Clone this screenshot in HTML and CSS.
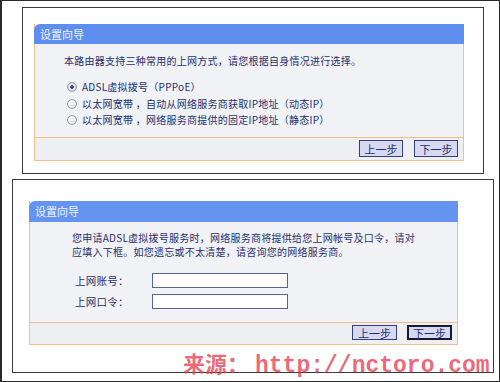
FILE: index.html
```html
<!DOCTYPE html>
<html>
<head>
    <title>设置向导</title>
    <link rel="stylesheet" href="styles.css">
</head>
<body>
    <div class="frame">
        <div class="panel panel-top">
            <div class="card card-wide">
                <div class="card-head">设置向导</div>
                <div class="card-body">
                    <p class="intro">本路由器支持三种常用的上网方式，请您根据自身情况进行选择。</p>
                    <ul class="choices">
                        <li><span class="radio checked"></span>ADSL虚拟拨号（PPPoE）</li>
                        <li><span class="radio"></span>以太网宽带 ，自动从网络服务商获取IP地址（动态IP）</li>
                        <li><span class="radio"></span>以太网宽带 ，网络服务商提供的固定IP地址（静态IP）</li>
                    </ul>
                </div>
                <div class="card-foot">
                    <button class="btn">上一步</button>
                    <button class="btn">下一步</button>
                </div>
            </div>
        </div>

        <div class="panel panel-bottom">
            <div class="card card-form">
                <div class="card-head">设置向导</div>
                <div class="card-body">
                    <p class="intro">您申请ADSL虚拟拨号服务时，网络服务商将提供给您上网帐号及口令，请对<br>应填入下框。如您遗忘或不太清楚，请咨询您的网络服务商。</p>
                    <div class="field">
                        <label>上网账号：</label>
                        <input type="text">
                    </div>
                    <div class="field">
                        <label>上网口令：</label>
                        <input type="password">
                    </div>
                </div>
                <div class="card-foot">
                    <button class="btn">上一步</button>
                    <button class="btn focused">下一步</button>
                </div>
            </div>
        </div>

        <div class="watermark">来源：<span>http://nctoro.com</span></div>
    </div>
</body>
</html>
```

FILE: styles.css
```css
html, body {
    margin: 0;
    padding: 0;
    background: #fff;
}
.frame {
    position: relative;
    width: 500px;
    height: 382px;
    box-sizing: border-box;
    border: 1px solid #2a2a2a;
    border-left-width: 2px;
    padding-top: 6px;
    overflow: hidden;
    font-family: "Noto Sans CJK SC", "Liberation Sans", sans-serif;
    color: #1f2f6c;
}
.panel {
    box-sizing: border-box;
    border: 1px solid #3a3a3a;
    background: #fff;
}
.panel-top {
    margin-left: 20px;
    width: 462px;
    height: 167px;
    padding: 16px 0 0 11px;
}
.panel-bottom {
    margin-left: 10px;
    margin-top: 5px;
    width: 482px;
    height: 194px;
    padding: 21px 0 0 16px;
}
.card {
    box-sizing: border-box;
    border: 1px solid #f6be88;
    border-top: none;
}
.card-wide { width: 430px; }
.card-form { width: 429px; }
.card-head {
    height: 20px;
    margin: 0 -1px;
    padding-left: 6px;
    background: #5f8fee;
    border-top-left-radius: 6px;
    color: #eef2ff;
    font-size: 11px;
    line-height: 20px;
}
.card-form .card-head {
    height: 21px;
    line-height: 21px;
    background: #6494f0;
}
.card-body {
    box-sizing: border-box;
    background: #f1f2f6;
    font-size: 10px;
    letter-spacing: 0.25px;
}
.card-wide .card-body {
    height: 93px;
    padding: 9px 0 0 29px;
}
.card-form .card-body {
    height: 100px;
    padding: 9px 0 0 42px;
}
.intro {
    margin: 0;
    line-height: 16px;
}
.card-form .intro {
    line-height: 14px;
}
.choices {
    list-style: none;
    margin: 10px 0 0 3px;
    padding: 0;
    line-height: 16.5px;
}
.choices li {
    display: flex;
    align-items: center;
}
.radio {
    width: 10px;
    height: 10px;
    box-sizing: border-box;
    border: 1px solid #9a9ca4;
    border-radius: 50%;
    background: radial-gradient(circle at 40% 35%, #fff, #d2d4da);
    margin-right: 5px;
}
.radio.checked {
    background: radial-gradient(circle, #2b3550 0, #4a5578 28%, #e8e9ee 34%, #c6c8d0 100%);
}
.field {
    display: flex;
    align-items: center;
    height: 15px;
    margin-top: 6px;
    padding-left: 3px;
}
.field:first-of-type {
    margin-top: 14px;
}
.field label {
    width: 77px;
    font-size: 10.5px;
}
.field input {
    box-sizing: border-box;
    width: 136px;
    height: 15px;
    margin: 0;
    padding: 0;
    border: 1px solid #56648f;
    background: #fff;
}
.card-foot {
    display: flex;
    justify-content: flex-end;
    gap: 11px;
    box-sizing: border-box;
    border-top: 1px solid #f6be88;
    background: #eeeff2;
    padding: 2px 5px 0 0;
}
.card-wide .card-foot { height: 23px; }
.card-form .card-foot {
    height: 22px;
    gap: 10px;
}
.btn {
    box-sizing: border-box;
    width: 44px;
    height: 17px;
    padding: 0;
    border: 1px solid #34407a;
    background: #d7d9f1;
    color: #1f2f6c;
    font-family: "Noto Sans CJK SC", sans-serif;
    font-size: 11px;
    line-height: 14px;
}
.card-form .btn {
    width: 45px;
    height: 15px;
    line-height: 12px;
}
.btn.focused {
    border: 2px solid #141a30;
}
.watermark {
    position: absolute;
    left: 181px;
    top: 345px;
    color: rgba(230, 56, 78, 0.75);
    font-family: "Noto Sans CJK SC", sans-serif;
    font-size: 22px;
    font-weight: bold;
    line-height: 32px;
    white-space: nowrap;
}
.watermark span {
    margin-left: 6px;
    font-family: "Liberation Mono", monospace;
    font-size: 23px;
}
```
